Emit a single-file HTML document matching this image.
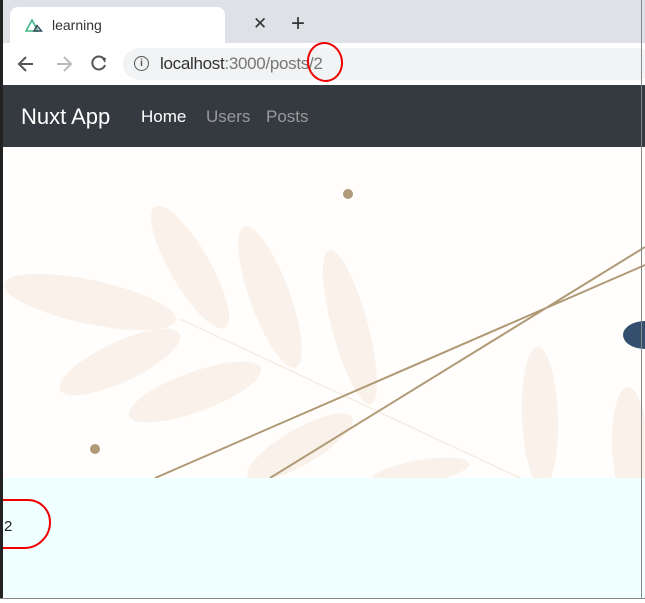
<!DOCTYPE html>
<html><head><style>
body{margin:0;width:645px;height:602px;overflow:hidden;background:#fff;font-family:"Liberation Sans",sans-serif;position:relative}
.a{position:absolute}
</style></head><body>
<div class="a" style="left:0;top:0;width:645px;height:43px;background:#dee1e6"></div>
<div class="a" style="left:10px;top:7px;width:215px;height:40px;background:#fff;border-radius:8px 8px 0 0"></div>
<svg class="a" style="left:25px;top:17px" width="18" height="16" viewBox="0 0 18 16"><path d="M1 14 L7 3 L13 14 Z" fill="none" stroke="#41b883" stroke-width="1.6"/><path d="M9 14 L12 8.5 L16.5 14 Z" fill="none" stroke="#35495e" stroke-width="1.4"/></svg>
<div class="a" style="left:52px;top:17px;font-size:14px;color:#333">learning</div>
<div class="a" style="left:253px;top:14px;font-size:17px;color:#333">✕</div>
<div class="a" style="left:291px;top:10px;font-size:24px;color:#333">+</div>
<div class="a" style="left:0;top:43px;width:645px;height:42px;background:#fff"></div>
<svg class="a" style="left:16px;top:54px" width="100" height="20" viewBox="0 0 100 20"><path d="M17 10 H4 M10 3 L3 10 L10 17" stroke="#555" stroke-width="2" fill="none"/><path d="M41 10 H54 M48 3 L55 10 L48 17" stroke="#bbb" stroke-width="2" fill="none"/><path d="M88 5 A6.5 6.5 0 1 0 89 11" stroke="#555" stroke-width="2" fill="none"/><path d="M85 3 L90 4 L89 9 Z" fill="#555"/></svg>
<div class="a" style="left:123px;top:48px;width:530px;height:32px;background:#f1f3f4;border-radius:16px"></div>
<div class="a" style="left:134px;top:56px;width:13px;height:13px;border:1.6px solid #555;border-radius:50%;font-size:10px;line-height:13px;text-align:center;color:#555;font-weight:bold">i</div>
<div class="a" style="left:160px;top:54px;font-size:17px;letter-spacing:-0.3px;color:#333">localhost<span style="color:#777">:3000/posts/2</span></div>
<div class="a" style="left:307px;top:42px;width:32px;height:36px;border:2px solid #e00;border-radius:50%;transform:rotate(-10deg)"></div>
<div class="a" style="left:0;top:85px;width:645px;height:62px;background:#343a40"></div>
<div class="a" style="left:21px;top:104px;font-size:22px;color:#fff">Nuxt App</div>
<div class="a" style="left:141px;top:107px;font-size:17px;color:#fff">Home</div>
<div class="a" style="left:206px;top:107px;font-size:17px;color:#999">Users</div>
<div class="a" style="left:266px;top:107px;font-size:17px;color:#999">Posts</div>
<svg class="a" style="left:0;top:147px" width="645" height="331" viewBox="0 0 645 331">
<rect width="645" height="331" fill="#fffefd"/>
<g fill="#faf2ea">
<ellipse cx="90" cy="155" rx="88" ry="22" transform="rotate(12 90 155)"/>
<ellipse cx="190" cy="120" rx="70" ry="20" transform="rotate(60 190 120)"/>
<ellipse cx="270" cy="150" rx="75" ry="20" transform="rotate(70 270 150)"/>
<ellipse cx="120" cy="215" rx="66" ry="20" transform="rotate(-25 120 215)"/>
<ellipse cx="195" cy="245" rx="70" ry="20" transform="rotate(-20 195 245)"/>
<ellipse cx="350" cy="180" rx="80" ry="18" transform="rotate(75 350 180)"/>
<ellipse cx="540" cy="270" rx="70" ry="18" transform="rotate(88 540 270)"/>
<ellipse cx="630" cy="300" rx="60" ry="18" transform="rotate(88 630 300)"/>
<ellipse cx="300" cy="300" rx="60" ry="18" transform="rotate(-30 300 300)"/>
<ellipse cx="420" cy="325" rx="50" ry="12" transform="rotate(-10 420 325)"/>
</g>
<path d="M180 172 L520 331" stroke="#f5ece3" stroke-width="1.5"/>
<path d="M155 331 L645 118 M270 331 L645 100" stroke="#b09a76" stroke-width="2" fill="none"/>
<circle cx="348" cy="47" r="5" fill="#b09a7a"/><circle cx="95" cy="302" r="5" fill="#b09a7a"/>
<ellipse cx="645" cy="188" rx="22" ry="14" fill="#34506e"/>
</svg>
<div class="a" style="left:0;top:478px;width:645px;height:120px;background:#f0ffff"></div>
<div class="a" style="left:4px;top:518px;font-size:15px;color:#222">2</div>
<div class="a" style="left:-15px;top:499px;width:62px;height:46px;border:2px solid #e00;border-radius:20px 24px 28px 20px"></div>
<div class="a" style="left:0;top:0;width:3px;height:602px;background:#222"></div>
<div class="a" style="left:641px;top:0;width:1px;height:602px;background:#888"></div>
<div class="a" style="left:0;top:598px;width:645px;height:4px;background:#fff;border-top:1px solid #888"></div>
</body></html>
